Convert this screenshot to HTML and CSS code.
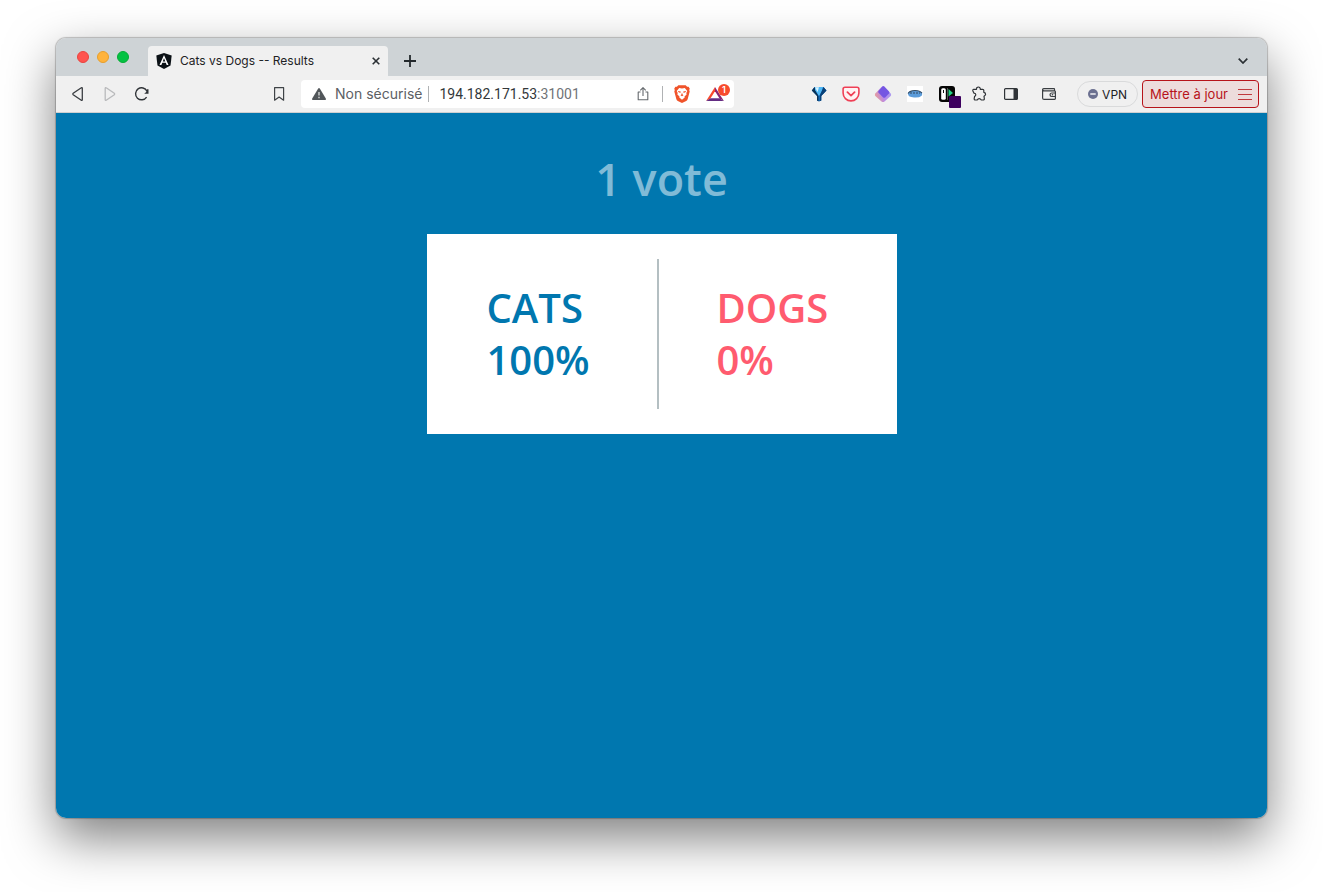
FILE: index.html
```html
<!DOCTYPE html>
<html lang="fr">
<head>
<meta charset="utf-8">
<title>Cats vs Dogs -- Results</title>
<link rel="stylesheet" href="styles.css">
</head>
<body>
<div class="window">
  <header class="tabbar">
    <div class="lights">
      <button class="light close" aria-label="Fermer"></button>
      <button class="light minimize" aria-label="Réduire"></button>
      <button class="light expand" aria-label="Agrandir"></button>
    </div>
    <div class="tab">
      <svg class="favicon" width="16" height="16" viewBox="0 0 16 16"><path d="M8 0 15.700 2.500 14.500 12.500 8 16 1.500 12.500.3 2.500z" fill="#0b1116"/><path d="M8 2 3.500 12h1.900l.9-2.200h3.500l.9 2.200h1.800zM8 5.200l1.300 3.200H6.800z" fill="#fff" fill-rule="evenodd"/></svg>
      <span class="tab-title">Cats vs Dogs -- Results</span>
      <button class="icon-button tab-close" aria-label="Fermer l'onglet"><svg width="8" height="8" viewBox="0 0 8 8"><path d="M.7.7l6.600 6.600M7.300.7.7 7.300" stroke="#2b3034" stroke-width="1.600"/></svg></button>
    </div>
    <button class="icon-button new-tab" aria-label="Nouvel onglet"><svg width="12" height="12" viewBox="0 0 12 12"><path d="M6 0v12M0 6h12" stroke="#23282c" stroke-width="1.800"/></svg></button>
    <button class="icon-button tab-list" aria-label="Liste des onglets"><svg width="10" height="6" viewBox="0 0 10 6"><path d="M.7.7 5 5 9.300.7" fill="none" stroke="#2b3034" stroke-width="1.700"/></svg></button>
  </header>

  <nav class="toolbar">
    <div class="group">
      <button class="icon-button tool" aria-label="Précédent"><svg width="16" height="16" viewBox="0 0 16 16"><path d="M12.300 2.300v11.400c0 .6-.6.8-1 .5L3.200 8.700a.9.9 0 0 1 0-1.400l8.100-5.500c.4-.3 1-.1 1 .5z" fill="none" stroke="#3a3e42" stroke-width="1.300"/></svg></button>
      <button class="icon-button tool" aria-label="Suivant"><svg width="16" height="16" viewBox="0 0 16 16"><path d="M3.200 2.300v11.400c0 .6.6.8 1 .5l8.100-5.500a.9.9 0 0 0 0-1.400L4.200 1.800c-.4-.3-1-.1-1 .5z" fill="none" stroke="#b9babc" stroke-width="1.300"/></svg></button>
      <button class="icon-button tool" aria-label="Actualiser"><svg width="16" height="16" viewBox="0 0 16 16"><path d="M12.600 11.100A6 6 0 1 1 13 5.200" fill="none" stroke="#303438" stroke-width="1.400"/><path d="M14.500 3.200v4.600H10.200q2.600-1.400 2.800-4.600z" fill="#303438"/></svg></button>
    </div>
    <div class="address">
      <button class="icon-button tool" aria-label="Ajouter aux favoris"><svg width="16" height="16" viewBox="0 0 16 16"><path d="M3.600 1.700h9v12.500L8.100 11l-4.500 3.200z" fill="none" stroke="#3f4347" stroke-width="1.200" stroke-linejoin="round"/></svg></button>
      <div class="url">
        <svg width="14" height="12" viewBox="0 0 14 12"><path d="M6.200.5q.8-1 1.600 0l6 10q.4 1.500-.8 1.500H1q-1.200 0-.8-1.500z" fill="#51565a"/><path d="M7 4v3.500M7 8.700v1.500" stroke="#dfe0e1" stroke-width="1.300"/></svg>
        <span class="security">Non sécurisé</span>
        <span class="divider"></span>
        <div class="location"><span class="host">194.182.171.53</span><span class="port">:31001</span></div>
        <button class="icon-button share" aria-label="Partager"><svg width="14" height="16" viewBox="0 0 14 16"><path d="M4.500 6H2.200v7.800h9.600V6H9.500M7 10V1.700M4.300 4.300 7 1.600l2.700 2.700" fill="none" stroke="#65696d" stroke-width="1.100" stroke-linejoin="round"/></svg></button>
        <span class="divider"></span>
        <button class="icon-button brave" aria-label="Brave Shields"><svg width="16" height="18" viewBox="0 0 16 18"><path d="M4.300.2h7.400l1.400 1.600 1.500-.1 1.200 2-.6 1.300.5 1.500-2 7.500q-.4 1.300-1.500 2L8 18l-4.200-2q-1.100-.7-1.500-2L.3 6.500.8 5 .2 3.700l1.200-2 1.500.1z" fill="#f0532a"/><path d="M5.200 2.900 8 3.400l2.800-.5 2.500 3-1 2.200.3 1.300-2.100 2.100.2 1L8 14.700l-2.700-2.200.2-1-2.100-2.100.3-1.300-1-2.200z" fill="#fff"/><path d="M4 6l2.800.6-.5 1.300-2-.8zM12 6l-2.800.6.5 1.300 2-.8zM8 7.500l.6 2 .9.800L8 11.300l-1.500-1 .9-.8z" fill="#f0532a"/></svg></button>
        <button class="icon-button rewards" aria-label="Brave Rewards"><svg width="18" height="16" viewBox="0 0 20 18"><path d="M10 1 0 17l4.800-2.800L10 6z" fill="#f8482c"/><path d="M0 17h20l-5-3.200H5z" fill="#632c83"/><path d="M10 1l10 16-5-3.200L10 6z" fill="#8c2470"/></svg><span class="badge">1</span></button>
      </div>
    </div>
    <div class="group">
      <button class="icon-button tool" aria-label="Diamant"><svg width="16" height="16" viewBox="0 0 16 16"><path d="M3.500 1h9L15.500 4.500 10.300 10v4.500L8 15.500l-2-1V10L.8 4.500z" fill="#146fc1"/><path d="M3.500 1 .8 4.500 6 10v4.500l1.500.8V10L4.500 4.500z" fill="#0a3358"/><path d="M4 1h8l-1 4-3 5-4-6z" fill="#4fb8f6"/><path d="M4 1.200h4L6.500 6z" fill="#d9f4ff"/><path d="M12.500 1l3 3.500-5.200 5.500v4.500l-1.500.7V9.500z" fill="#0a4177"/></svg></button>
      <button class="icon-button tool" aria-label="Pocket"><svg width="18" height="16" viewBox="0 0 18 16"><path d="M3 1.200h12q1.900 0 1.900 1.900V7a7.900 7.900 0 0 1-15.800 0V3.100Q1.100 1.200 3 1.200z" fill="#fff2f3" stroke="#ef4056" stroke-width="1.600"/><path d="M5.400 6.200 9 9.600l3.600-3.400" fill="none" stroke="#ef4056" stroke-width="1.800" stroke-linecap="round" stroke-linejoin="round"/></svg></button>
      <button class="icon-button tool" aria-label="Calques"><svg width="18" height="18" viewBox="0 0 18 18"><defs><linearGradient id="layers" x1="0" y1=".8" x2="1" y2=".4"><stop stop-color="#f0a08c"/><stop offset=".5" stop-color="#b98ae8"/><stop offset="1" stop-color="#a99af2"/></linearGradient></defs><path d="M1.300 8.400 7.500 2q1.500-1.500 3 0l6.200 6.400q1 1.500 0 2.600l-6.200 5.400q-1.500 1.200-3 0L1.300 11q-1-1.100 0-2.600z" fill="url(#layers)"/><path d="M4.500 6 8.400 1.500q1-1 2 0L15 6.600q.7.900 0 1.800l-3.800 4q-1 .8-2 0L4.500 7.700q-.7-.8 0-1.700z" fill="#6a4be0" opacity=".85"/></svg></button>
      <button class="icon-button tool" aria-label="Extension"><svg width="16" height="16" viewBox="0 0 16 16"><path d="M0 0h16v16H0z" fill="#fff"/><path d="M1 8q0-3 4-3.300Q10 4 14 5.700q2 1.500.7 4Q12 12 7 11.500 1 11 1 8z" fill="#5c9cda"/><path d="M1 7.500Q3 4.500 8 4.500t7 2.700M3 7h2m1 0h2m1 0h2m1 0h1" fill="none" stroke="#344b63" stroke-width="1.200"/></svg></button>
      <button class="icon-button tool recorder" aria-label="Enregistreur"><svg width="16" height="16" viewBox="0 0 16 16"><rect width="16" height="16" rx="3" fill="#050505"/><rect x="2.200" y="2.200" width="4.600" height="11.600" rx="1.500" fill="#fff"/><path d="M4.500 4v3" stroke="#111"/><path d="M9.500 3l4.500 4-4.500 3.500z" fill="#22cf84"/><path d="M8.500 2v12" stroke="#666" stroke-width=".8"/></svg><span class="marker"></span></button>
      <button class="icon-button tool" aria-label="Extensions"><svg width="16" height="16" viewBox="0 0 16 16"><path d="M2.800 3.300h2.700C5.400 1.600 6.300 1 7.400 1s2 .8 1.900 2.300h2.500q1 0 1 1v2c1.200.2 1.800.9 1.800 1.900s-.8 1.500-1.600 2l.3 2.300q.2 1.500-1.200 1.500l-2-.2q-.6-1.200-1.900-1.200t-1.800 1.200l-2 .2q-1.400 0-1.200-1.400l.4-2.200q1.200-.5 1.200-1.700T3 7.200L1.900 5Q1.500 3.500 2.800 3.300z" fill="none" stroke="#303438" stroke-width="1.200" stroke-linejoin="round"/></svg></button>
      <button class="icon-button tool" aria-label="Panneau latéral"><svg width="14" height="12" viewBox="0 0 14 12"><rect x=".6" y=".6" width="12.800" height="10.800" rx="1" fill="none" stroke="#303438" stroke-width="1.200"/><path d="M9.500 1h3.800v10H9.500z" fill="#303438"/></svg></button>
      <button class="icon-button tool wallet" aria-label="Portefeuille"><svg width="14" height="12" viewBox="0 0 14 12"><path d="M12.500 2.800V1.200Q12.500.6 12 .6H1.700Q.6.6.6 1.700v8.200q0 1.500 1.500 1.500h10.500q.8 0 .8-.8V3.800q0-.9-.8-.9H2Q.8 2.900.6 1.700M13.400 5H9.700Q8 5.200 8 6.800t1.700 1.700h3.700" fill="none" stroke="#3a3e42" stroke-width="1.200"/><circle cx="10.500" cy="6.800" r=".8" fill="#3a3e42"/></svg></button>
      <button class="vpn"><svg width="10" height="10" viewBox="0 0 10 10"><circle cx="5" cy="5" r="5" fill="#6b7090"/><path d="M2.300 5h5.400" stroke="#f2f2f5" stroke-width="1.500"/></svg>VPN</button>
      <button class="update">Mettre à jour<svg width="14" height="11" viewBox="0 0 14 11"><path d="M0 .5h14M0 5.500h14M0 10.500h14" stroke="#c03a3e"/></svg></button>
    </div>
  </nav>

  <main class="page">
    <h1 class="total">1 vote</h1>
    <section class="results">
      <div class="choice cats"><div>CATS</div><div>100%</div></div>
      <div class="choice dogs"><div>DOGS</div><div>0%</div></div>
    </section>
  </main>
</div>
</body>
</html>
```
FILE: styles.css
```css
* { box-sizing: border-box; }

body {
  display: flex;
  min-height: 100vh;
  margin: 0;
  padding: 38px 56px 74px;
  background: #fff;
  font-family: Inter, "Liberation Sans", sans-serif;
}

button {
  margin: 0;
  padding: 0;
  border: 0;
  background: none;
  font: inherit;
}

svg { display: block; flex: none; }

.window {
  display: flex;
  flex: 1;
  flex-direction: column;
  overflow: hidden;
  border-radius: 10px;
  background: #f0f0f0;
  box-shadow: 0 0 1px 1px rgba(0, 0, 0, .22), 0 20px 50px rgba(0, 0, 0, .5);
}

.tabbar {
  display: flex;
  align-items: flex-end;
  height: 38px;
  padding: 0 14px 0 21px;
  background: #ced3d6;
}

.lights { display: flex; gap: 8px; padding-bottom: 13px; }

.light { width: 12px; height: 12px; border-radius: 50%; }
.close { border: 1px solid #e9443f; background: #ff534f; }
.minimize { border: 1px solid #e79f2c; background: #ffb33c; }
.expand { border: 1px solid #05ac35; background: #04c243; }

.tab {
  display: flex;
  align-items: center;
  width: 240px;
  height: 30px;
  margin-left: 19px;
  padding: 0 4px 0 8px;
  border-radius: 4px 4px 0 0;
  background: #f0f0f0;
}

.tab-title {
  flex: 1;
  margin-left: 8px;
  color: #1e2225;
  font-size: 12px;
  line-height: 16px;
  white-space: nowrap;
}

.icon-button { display: flex; align-items: center; justify-content: center; }
.tab-close { width: 16px; height: 16px; }
.new-tab { width: 32px; height: 30px; margin-left: 6px; }
.tab-list { width: 20px; height: 30px; margin-left: auto; }

.toolbar {
  display: grid;
  grid-template-columns: auto 38fr minmax(300px, 471px) 25fr auto;
  align-items: center;
  height: 37px;
  padding: 0 8px 0 6px;
  border-bottom: 1px solid #cfd0d1;
  background: #f0f0f0;
}

.address { grid-column: 3; }
.group:last-child { grid-column: 5; }
.group, .address { display: flex; align-items: center; }
.tool { flex: none; width: 32px; height: 28px; }

.url {
  display: flex;
  flex: 1;
  align-items: center;
  height: 28px;
  margin-left: 6px;
  padding: 0 4px 0 11px;
  border-radius: 4px;
  background: #fff;
  font-size: 14px;
  line-height: 16px;
  white-space: nowrap;
}

.security { margin: 0 6px 0 9px; color: #5c6064; }
.divider { width: 1px; height: 16px; background: #b0b2b4; }
.location { flex: 1; margin-left: 10px; font-family: Roboto, sans-serif; }
.host { color: #33373a; }
.port { color: #707477; }
.share { width: 20px; height: 28px; margin-right: 9px; }
.brave { width: 20px; height: 28px; margin-left: 9px; }

.rewards {
  position: relative;
  justify-content: flex-start;
  width: 24px;
  height: 28px;
  margin-left: 14px;
}

.badge {
  position: absolute;
  top: 4px;
  right: 0;
  width: 12px;
  height: 12px;
  border-radius: 50%;
  background: #f84b2d;
  color: #fff;
  font-size: 9px;
  font-weight: 600;
  line-height: 12px;
}

.recorder { position: relative; }
.marker {
  position: absolute;
  right: 2px;
  bottom: 0;
  width: 12px;
  height: 12px;
  border-radius: 1px;
  background: #3d005f;
}

.wallet { margin-left: 6px; }

.vpn {
  display: flex;
  align-items: center;
  gap: 4px;
  height: 26px;
  margin-left: 12px;
  padding: 0 10px;
  border: 1px solid #d9dadb;
  border-radius: 13px;
  color: #1e2225;
  font-size: 12px;
}

.update {
  display: flex;
  align-items: center;
  gap: 10px;
  height: 28px;
  margin-left: 4px;
  padding: 0 6px 0 7px;
  border: 1px solid #b7131a;
  border-radius: 4px;
  background: #eddcdc;
  color: #b7131a;
  font-size: 13px;
  white-space: nowrap;
}

.page {
  display: flex;
  flex: 1;
  flex-direction: column;
  align-items: center;
  padding-top: 36px;
  background: #0077af;
  font-family: "Open Sans", sans-serif;
  font-weight: 600;
}

.total {
  margin: 0 0 25px;
  color: #80bbd7;
  font-size: 45px;
  font-weight: 600;
  line-height: 60px;
}

.results {
  display: grid;
  grid-template-columns: 23fr 24fr;
  width: 470px;
  max-width: 100%;
  padding: 25px 0;
  background: #fff;
}

.choice {
  padding: 23px 0 23px 58px;
  font-size: 40px;
  line-height: 52px;
}

.cats { padding-left: 60px; color: #0077af; }
.dogs { border-left: 2px solid #b4bfc2; color: #ff5b6f; }
```
